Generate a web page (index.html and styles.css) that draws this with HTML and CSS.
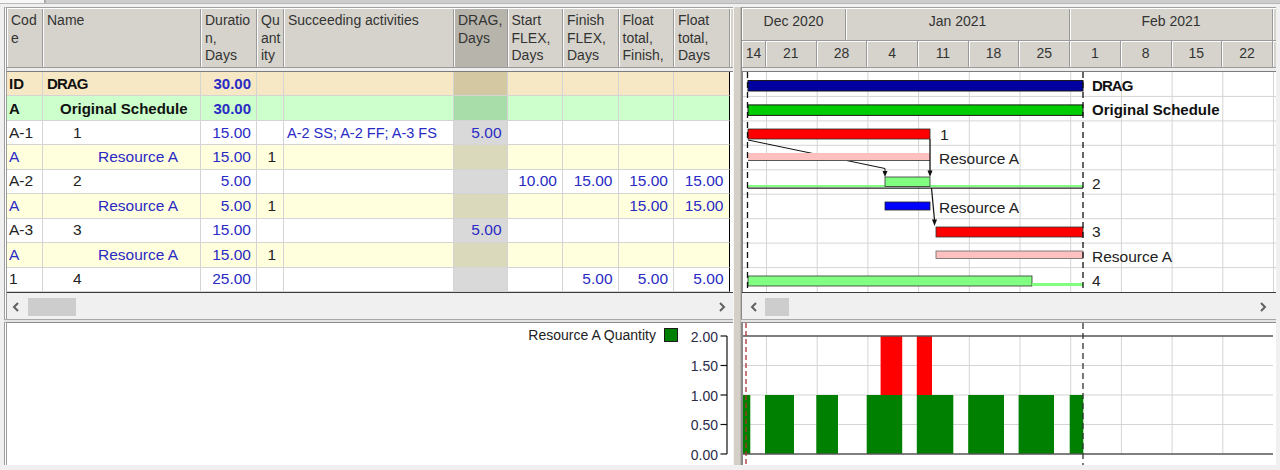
FILE: index.html
```html
<!DOCTYPE html>
<html>
<head>
<meta charset="utf-8">
<title>DRAG schedule</title>
<link rel="stylesheet" href="styles.css">
</head>
<body>
<div class="topstrip"><div class="tab"></div></div>
<div class="main">
  <div class="leftcol">
    <div class="gridpanel">
      <div class="hdr cols">
        <div class="hc">Cod<br>e</div>
        <div class="hc">Name</div>
        <div class="hc">Duratio<br>n,<br>Days</div>
        <div class="hc">Qu<br>ant<br>ity</div>
        <div class="hc">Succeeding activities</div>
        <div class="hc dragh">DRAG,<br>Days</div>
        <div class="hc">Start<br>FLEX,<br>Days</div>
        <div class="hc">Finish<br>FLEX,<br>Days</div>
        <div class="hc">Float<br>total,<br>Finish,</div>
        <div class="hc">Float<br>total,<br>Days</div>
        <div class="hc hfill"></div>
      </div>
      <div class="hsep"></div>
      <div class="rows">
        <div class="row cols r-id">
          <div class="c code b">ID</div><div class="c name l0 b tight">DRAG</div><div class="c num b">30.00</div><div class="c qty"></div><div class="c succ"></div><div class="c num drag"></div><div class="c num"></div><div class="c num"></div><div class="c num"></div><div class="c num last"></div>
        </div>
        <div class="row cols r-orig">
          <div class="c code b">A</div><div class="c name l1 b">Original Schedule</div><div class="c num b">30.00</div><div class="c qty"></div><div class="c succ"></div><div class="c num drag"></div><div class="c num"></div><div class="c num"></div><div class="c num"></div><div class="c num last"></div>
        </div>
        <div class="row cols r-task">
          <div class="c code">A-1</div><div class="c name l2">1</div><div class="c num">15.00</div><div class="c qty"></div><div class="c succ">A-2 SS; A-2 FF; A-3 FS</div><div class="c num drag">5.00</div><div class="c num"></div><div class="c num"></div><div class="c num"></div><div class="c num last"></div>
        </div>
        <div class="row cols r-res">
          <div class="c code">A</div><div class="c name l3">Resource A</div><div class="c num">15.00</div><div class="c qty">1</div><div class="c succ"></div><div class="c num drag"></div><div class="c num"></div><div class="c num"></div><div class="c num"></div><div class="c num last"></div>
        </div>
        <div class="row cols r-task">
          <div class="c code">A-2</div><div class="c name l2">2</div><div class="c num">5.00</div><div class="c qty"></div><div class="c succ"></div><div class="c num drag"></div><div class="c num">10.00</div><div class="c num">15.00</div><div class="c num">15.00</div><div class="c num last">15.00</div>
        </div>
        <div class="row cols r-res">
          <div class="c code">A</div><div class="c name l3">Resource A</div><div class="c num">5.00</div><div class="c qty">1</div><div class="c succ"></div><div class="c num drag"></div><div class="c num"></div><div class="c num"></div><div class="c num">15.00</div><div class="c num last">15.00</div>
        </div>
        <div class="row cols r-task">
          <div class="c code">A-3</div><div class="c name l2">3</div><div class="c num">15.00</div><div class="c qty"></div><div class="c succ"></div><div class="c num drag">5.00</div><div class="c num"></div><div class="c num"></div><div class="c num"></div><div class="c num last"></div>
        </div>
        <div class="row cols r-res">
          <div class="c code">A</div><div class="c name l3">Resource A</div><div class="c num">15.00</div><div class="c qty">1</div><div class="c succ"></div><div class="c num drag"></div><div class="c num"></div><div class="c num"></div><div class="c num"></div><div class="c num last"></div>
        </div>
        <div class="row cols r-task">
          <div class="c code">1</div><div class="c name l2">4</div><div class="c num">25.00</div><div class="c qty"></div><div class="c succ"></div><div class="c num drag"></div><div class="c num"></div><div class="c num">5.00</div><div class="c num">5.00</div><div class="c num last">5.00</div>
        </div>
      </div>
      <div class="gline"></div>
      <div class="hscroll hs-left">
        <div class="sarrow"><svg width="8" height="10" viewBox="0 0 8 10"><polyline points="6,1 2,5 6,9" fill="none" stroke="#606060" stroke-width="2"/></svg></div>
        <div class="thumb thumb-left"></div>
        <div class="spacer"></div>
        <div class="sarrow sarrow-r"><svg width="8" height="10" viewBox="0 0 8 10"><polyline points="2,1 6,5 2,9" fill="none" stroke="#606060" stroke-width="2"/></svg></div>
      </div>
    </div>
    <div class="hsplit"></div>
    <div class="bpanel bl">
      <svg class="chart" width="726" height="142" viewBox="0 0 726 142">
        <text x="649" y="16.5" text-anchor="end" class="legend">Resource A Quantity</text>
        <rect x="657.5" y="5.5" width="13" height="13" fill="#008000" stroke="#1a1a1a" stroke-width="1"/>
        <line x1="720" y1="13" x2="720" y2="131" stroke="#111" stroke-width="1.2"/>
        <g stroke="#111" stroke-width="1.2">
          <line x1="713.5" y1="13" x2="720" y2="13"/>
          <line x1="713.5" y1="42.5" x2="720" y2="42.5"/>
          <line x1="713.5" y1="72" x2="720" y2="72"/>
          <line x1="713.5" y1="101.5" x2="720" y2="101.5"/>
          <line x1="713.5" y1="131" x2="720" y2="131"/>
        </g>
        <g class="axis" text-anchor="end">
          <text x="711" y="18.5">2.00</text>
          <text x="711" y="48">1.50</text>
          <text x="711" y="77.5">1.00</text>
          <text x="711" y="107">0.50</text>
          <text x="711" y="136.5">0.00</text>
        </g>
      </svg>
    </div>
  </div>
  <div class="vsplit"></div>
  <div class="rightcol">
    <div class="gpanel">
      <div class="ghdr">
        <div class="mrow">
          <div class="gc" style="width:104px">Dec 2020</div>
          <div class="gc" style="width:224px">Jan 2021</div>
          <div class="gc" style="width:203px">Feb 2021</div>
          <div class="gc gfill"></div>
        </div>
        <div class="wrow">
          <div class="gc" style="width:24px">14</div>
          <div class="gc" style="width:50.7px">21</div>
          <div class="gc" style="width:50.7px">28</div>
          <div class="gc" style="width:50.7px">4</div>
          <div class="gc" style="width:50.7px">11</div>
          <div class="gc" style="width:50.7px">18</div>
          <div class="gc" style="width:50.7px">25</div>
          <div class="gc" style="width:50.7px">1</div>
          <div class="gc" style="width:50.7px">8</div>
          <div class="gc" style="width:50.7px">15</div>
          <div class="gc" style="width:50.7px">22</div>
          <div class="gc gfill"></div>
        </div>
      </div>
      <div class="hsep"></div>
      <svg class="gbody" width="534" height="220" viewBox="0 0 534 220">
        <g stroke="#d4d4d4" stroke-width="1">
          <line x1="24.5" y1="0" x2="24.5" y2="220"/>
          <line x1="75.2" y1="0" x2="75.2" y2="220"/>
          <line x1="125.9" y1="0" x2="125.9" y2="220"/>
          <line x1="176.6" y1="0" x2="176.6" y2="220"/>
          <line x1="227.3" y1="0" x2="227.3" y2="220"/>
          <line x1="278" y1="0" x2="278" y2="220"/>
          <line x1="328.7" y1="0" x2="328.7" y2="220"/>
          <line x1="379.4" y1="0" x2="379.4" y2="220"/>
          <line x1="430.1" y1="0" x2="430.1" y2="220"/>
          <line x1="480.8" y1="0" x2="480.8" y2="220"/>
          <line x1="531.5" y1="0" x2="531.5" y2="220"/>
          <line x1="0" y1="24.4" x2="534" y2="24.4"/>
          <line x1="0" y1="48.9" x2="534" y2="48.9"/>
          <line x1="0" y1="73.3" x2="534" y2="73.3"/>
          <line x1="0" y1="97.8" x2="534" y2="97.8"/>
          <line x1="0" y1="122.2" x2="534" y2="122.2"/>
          <line x1="0" y1="146.7" x2="534" y2="146.7"/>
          <line x1="0" y1="171.1" x2="534" y2="171.1"/>
          <line x1="0" y1="195.6" x2="534" y2="195.6"/>
        </g>
        <line x1="0.5" y1="0" x2="0.5" y2="220" stroke="#8a8a8a" stroke-width="1"/>
        <polyline points="6,68 143,96.5 143,100" fill="none" stroke="#111" stroke-width="1"/>
        <polygon points="140.5,99 145.5,99 143,105" fill="#111"/>
        <rect x="6" y="8.5" width="335" height="10.5" fill="#0000a0" stroke="#1a1a1a" stroke-width="1"/>
        <rect x="6" y="32.9" width="335" height="10.5" fill="#00cc00" stroke="#1a1a1a" stroke-width="1"/>
        <rect x="6" y="57" width="182" height="10" fill="#ff0000" stroke="#2a2a2a" stroke-width="0.8"/>
        <rect x="6" y="81" width="182" height="7" fill="#ffc0c0"/>
        <line x1="6" y1="88.5" x2="188" y2="88.5" stroke="#555" stroke-width="1"/>
        <rect x="5" y="113" width="336" height="2" fill="#80ff80"/>
        <rect x="143" y="105" width="45" height="9.5" fill="#80ff80" stroke="#333" stroke-width="0.8"/>
        <line x1="5.5" y1="116.2" x2="341" y2="116.2" stroke="#222" stroke-width="1.3"/>
        <rect x="143" y="130" width="45" height="8" fill="#0000ff" stroke="#222" stroke-width="0.8"/>
        <rect x="194" y="155" width="147" height="10" fill="#ff0000" stroke="#333" stroke-width="0.8"/>
        <rect x="194" y="179" width="147" height="7.5" fill="#ffc0c0" stroke="#666" stroke-width="0.8"/>
        <rect x="6" y="204" width="284" height="10" fill="#80ff80" stroke="#333" stroke-width="0.8"/>
        <rect x="290" y="211" width="51" height="3" fill="#80ff80"/>
        <line x1="188" y1="67" x2="188" y2="99" stroke="#111" stroke-width="1.3"/>
        <polygon points="185.5,98.5 190.5,98.5 188,105" fill="#111"/>
        <line x1="189.5" y1="116" x2="192.5" y2="148" stroke="#111" stroke-width="1.2"/>
        <polygon points="190,147.5 195,147.5 192.5,154" fill="#111"/>
        <line x1="5.5" y1="0" x2="5.5" y2="220" stroke="#111" stroke-width="1.3" stroke-dasharray="6 4"/>
        <line x1="341" y1="0" x2="341" y2="220" stroke="#111" stroke-width="1.3" stroke-dasharray="6 4"/>
        <g class="glabel">
          <text x="350" y="18.7" class="gb tight">DRAG</text>
          <text x="350" y="43.1" class="gb">Original Schedule</text>
          <text x="198" y="67.6">1</text>
          <text x="197" y="92">Resource A</text>
          <text x="350" y="116.5">2</text>
          <text x="197" y="140.9">Resource A</text>
          <text x="350" y="165.3">3</text>
          <text x="350" y="189.8">Resource A</text>
          <text x="350" y="214.2">4</text>
        </g>
      </svg>
      <div class="gline"></div>
      <div class="hscroll hs-right">
        <div class="sarrow sarrow-l2"><svg width="8" height="10" viewBox="0 0 8 10"><polyline points="6,1 2,5 6,9" fill="none" stroke="#606060" stroke-width="2"/></svg></div>
        <div class="thumb thumb-right"></div>
        <div class="spacer"></div>
        <div class="sarrow sarrow-r2"><svg width="8" height="10" viewBox="0 0 8 10"><polyline points="2,1 6,5 2,9" fill="none" stroke="#606060" stroke-width="2"/></svg></div>
      </div>
    </div>
    <div class="hsplit"></div>
    <div class="bpanel br">
      <svg class="chart" width="534" height="142" viewBox="0 0 534 142">
        <g stroke="#d4d4d4" stroke-width="1">
          <line x1="24.5" y1="13" x2="24.5" y2="131"/>
          <line x1="75.2" y1="13" x2="75.2" y2="131"/>
          <line x1="125.9" y1="13" x2="125.9" y2="131"/>
          <line x1="176.6" y1="13" x2="176.6" y2="131"/>
          <line x1="227.3" y1="13" x2="227.3" y2="131"/>
          <line x1="278" y1="13" x2="278" y2="131"/>
          <line x1="328.7" y1="13" x2="328.7" y2="131"/>
          <line x1="379.4" y1="13" x2="379.4" y2="131"/>
          <line x1="430.1" y1="13" x2="430.1" y2="131"/>
          <line x1="480.8" y1="13" x2="480.8" y2="131"/>
          <line x1="0" y1="42.5" x2="531" y2="42.5"/>
          <line x1="0" y1="72" x2="531" y2="72"/>
          <line x1="0" y1="101.5" x2="531" y2="101.5"/>
        </g>
        <g fill="#008000">
          <rect x="0" y="72" width="8.3" height="59"/>
          <rect x="23" y="72" width="29" height="59"/>
          <rect x="74.3" y="72" width="21.7" height="59"/>
          <rect x="124.7" y="72" width="35.5" height="59"/>
          <rect x="174.8" y="72" width="36.5" height="59"/>
          <rect x="226.2" y="72" width="35.8" height="59"/>
          <rect x="276.6" y="72" width="35.4" height="59"/>
          <rect x="327.7" y="72" width="13.6" height="59"/>
        </g>
        <g fill="#ff0000">
          <rect x="138.6" y="13" width="21.6" height="59"/>
          <rect x="174.8" y="13" width="15.2" height="59"/>
        </g>
        <line x1="0" y1="13" x2="531" y2="13" stroke="#555" stroke-width="1.5"/>
        <line x1="0" y1="131" x2="531" y2="131" stroke="#555" stroke-width="1.5"/>
        <line x1="0.5" y1="0" x2="0.5" y2="142" stroke="#8a8a8a" stroke-width="1"/>
        <line x1="4" y1="0" x2="4" y2="142" stroke="#b03030" stroke-width="1.3" stroke-dasharray="5 3"/>
        <line x1="341" y1="0" x2="341" y2="142" stroke="#333" stroke-width="1.3" stroke-dasharray="6 4"/>
      </svg>
    </div>
  </div>
</div>
</body>
</html>
```

FILE: styles.css
```css
* { box-sizing: border-box; }
html, body { margin: 0; padding: 0; }
body {
  width: 1280px;
  height: 470px;
  overflow: hidden;
  background: #f0f0f0;
  font-family: "Liberation Sans", Arial, sans-serif;
  color: #222;
}
.topstrip {
  height: 4px;
  display: flex;
  background: #cdcdcd;
  border-bottom: 1px solid #b9b9b9;
}
.tab {
  width: 46px;
  background: #f7f7f7;
  border-right: 2px solid #a9a9a9;
}
.main {
  display: flex;
  height: 458px;
  margin-top: 3px;
  padding-left: 4px;
}
.leftcol {
  width: 729px;
  display: flex;
  flex-direction: column;
}
.rightcol {
  width: 535px;
  display: flex;
  flex-direction: column;
}
.vsplit {
  width: 8px;
  background: #d4d0c8;
  border-left: 1px solid #f6f6f6;
  border-right: 1px solid #bdb9b1;
}
.gridpanel {
  height: 312px;
  border-left: 3px double #9c9c9c;
  border-top: 1px solid #a0a0a0;
  background: #fff;
  display: flex;
  flex-direction: column;
}
.cols {
  display: grid;
  grid-template-columns: 36px 158px 56px 27px 170px 53.5px 55.5px 55.5px 55.5px 55.5px;
}
.hdr {
  grid-template-columns: 36px 158px 56px 27px 170px 53.5px 55.5px 55.5px 55.5px 55.5px 3.5px;
  height: 60px;
  background: #d6d3cc;
  border-top: 1px solid #ffffff;
  border-bottom: 1px solid #9a9a9a;
}
.hc {
  border-right: 1px solid #9a9a9a;
  box-shadow: inset 1px 0 0 #fbfbfb;
  font-size: 14px;
  line-height: 17.7px;
  padding: 3px 0 0 4px;
  color: #333;
  overflow: hidden;
  white-space: nowrap;
}
.hc.dragh { background: #b7b5ab; }
.hc.hfill { border-right: 0; }
.hsep {
  height: 4px;
  background: #ededed;
  border-bottom: 1px solid #7c7c7c;
}
.rows {
  height: 220px;
  background: #fff;
}
.row { height: 24.44px; }
.c {
  border-right: 1px solid #d4d4d4;
  border-bottom: 1px solid #d4d4d4;
  display: flex;
  align-items: center;
  font-size: 15.5px;
  white-space: nowrap;
  overflow: hidden;
  padding: 0 5px 0 2px;
  color: #222;
}
.c.last { border-right-color: #000; }
.c.b { font-weight: bold; font-size: 15px; color: #111; }
.c.num { justify-content: flex-end; color: #2a2ac4; }
.c.num.b { color: #2a2ac4; }
.c.qty { justify-content: flex-end; padding-right: 7px; }
.c.succ { font-size: 14.5px; color: #2a2ac4; padding-left: 3px; }
.tight { letter-spacing: -0.9px; }
.l0 { padding-left: 4px; }
.l1 { padding-left: 17px; }
.l2 { padding-left: 30px; }
.l3 { padding-left: 55px; }
.r-id .c { background: #f7e8c5; }
.r-id .c.drag { background: #d4c8a3; }
.r-orig .c { background: #ccffcc; }
.r-orig .c.drag { background: #a8dca8; }
.r-task .c { background: #ffffff; }
.r-task .c.drag { background: #d9d9d9; }
.r-res .c { background: #ffffde; }
.r-res .c.drag { background: #dad9bc; }
.r-res .c.code, .r-res .c.name { color: #2a2ac4; }
.gline {
  height: 1px;
  background: #3c3c3c;
}
.hscroll {
  height: 26px;
  background: #f0f0f0;
  display: flex;
  align-items: center;
  padding-top: 2px;
}
.sarrow {
  width: 17px;
  height: 18px;
  display: flex;
  align-items: center;
  justify-content: center;
}
.sarrow svg { display: block; }
.spacer { flex: 1; }
.thumb {
  height: 18px;
  background: #cdcdcd;
}
.thumb-left { width: 48px; margin-left: 4px; }
.sarrow-r { margin-right: 3px; }
.sarrow-l2 { margin-left: 3px; }
.thumb-right { width: 24px; margin-left: 3px; }
.sarrow-r2 { margin-right: 5px; }
.hsplit {
  height: 3px;
  background: #e4e4e4;
  border-top: 1px solid #a8a8a8;
}
.bpanel {
  height: 143px;
  background: #fff;
  border-top: 1px solid #8c8c8c;
}
.bl { border-left: 3px double #9c9c9c; }
.br { border-left: 1px solid #8a8a8a; }
.chart { display: block; }
.legend {
  font-family: "Liberation Sans", Arial, sans-serif;
  font-size: 14px;
  fill: #222;
}
.axis text {
  font-family: "Liberation Sans", Arial, sans-serif;
  font-size: 14px;
  fill: #2b2b48;
}
.gpanel {
  height: 312px;
  border-left: 1px solid #8a8a8a;
  border-top: 1px solid #a0a0a0;
  background: #fff;
  display: flex;
  flex-direction: column;
}
.ghdr {
  height: 60px;
  background: #d6d3cc;
  border-top: 1px solid #ffffff;
  display: flex;
  flex-direction: column;
}
.mrow {
  display: flex;
  height: 32px;
  border-bottom: 1px solid #9a9a9a;
}
.wrow {
  display: flex;
  height: 27px;
  border-bottom: 1px solid #9a9a9a;
  box-shadow: inset 0 1px 0 #fbfbfb;
}
.gc {
  flex: none;
  border-right: 1px solid #9a9a9a;
  box-shadow: inset 1px 0 0 #fbfbfb;
  font-size: 14px;
  line-height: 17px;
  text-align: center;
  color: #333;
  padding-top: 4px;
  white-space: nowrap;
  overflow: hidden;
}
.gc.gfill { flex: 1; border-right: 0; }
.gbody { display: block; }
.glabel text {
  font-family: "Liberation Sans", Arial, sans-serif;
  font-size: 15.5px;
  fill: #222;
}
.glabel text.gb {
  font-weight: bold;
  font-size: 15px;
  fill: #111;
}
```
